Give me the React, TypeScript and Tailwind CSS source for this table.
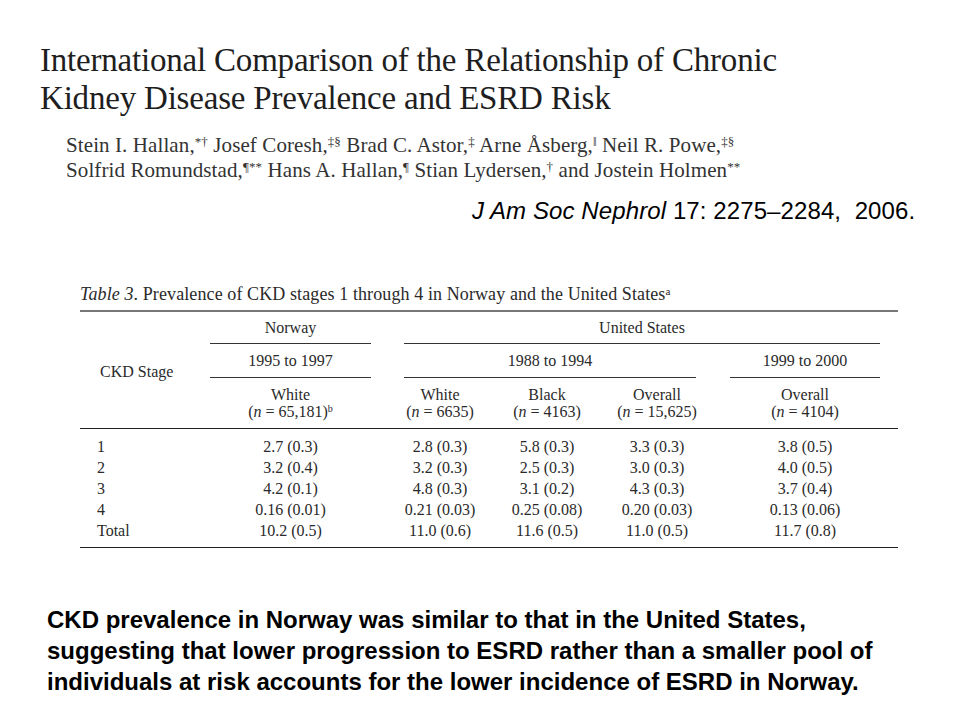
import React from "react";

const serif = { fontFamily: '"Liberation Serif", "DejaVu Serif", serif' };

const rows = [
  ["1", "2.7 (0.3)", "2.8 (0.3)", "5.8 (0.3)", "3.3 (0.3)", "3.8 (0.5)"],
  ["2", "3.2 (0.4)", "3.2 (0.3)", "2.5 (0.3)", "3.0 (0.3)", "4.0 (0.5)"],
  ["3", "4.2 (0.1)", "4.8 (0.3)", "3.1 (0.2)", "4.3 (0.3)", "3.7 (0.4)"],
  ["4", "0.16 (0.01)", "0.21 (0.03)", "0.25 (0.08)", "0.20 (0.03)", "0.13 (0.06)"],
  ["Total", "10.2 (0.5)", "11.0 (0.6)", "11.6 (0.5)", "11.0 (0.5)", "11.7 (0.8)"],
];

function NHead({ label, n, sup }: { label: string; n: string; sup?: string }) {
  return (
    <div className="flex flex-col items-center leading-[17px] whitespace-nowrap">
      <span>{label}</span>
      <span>
        (<i>n</i> = {n})
        {sup ? <sup className="text-[10px]">{sup}</sup> : null}
      </span>
    </div>
  );
}

export default function App() {
  return (
    <div className="w-[960px] h-[720px] bg-white relative overflow-hidden">
      {/* Title */}
      <div className="pl-[40px] pt-[41px] text-[#1e1e1e] text-[33px] leading-[38px] tracking-[-0.2px] whitespace-nowrap" style={serif}>
        <div>International Comparison of the Relationship of Chronic</div>
        <div>Kidney Disease Prevalence and ESRD Risk</div>
      </div>

      {/* Authors */}
      <div className="pl-[66px] pt-[16px] text-[#333] text-[21px] leading-[25px] tracking-[0.1px] whitespace-nowrap" style={serif}>
        <div>
          Stein I. Hallan,<sup className="text-[13px]">*†</sup> Josef Coresh,<sup className="text-[13px]">‡§</sup> Brad C. Astor,<sup className="text-[13px]">‡</sup> Arne Åsberg,<sup className="text-[13px]">‖</sup> Neil R. Powe,<sup className="text-[13px]">‡§</sup>
        </div>
        <div>
          Solfrid Romundstad,<sup className="text-[13px]">¶**</sup> Hans A. Hallan,<sup className="text-[13px]">¶</sup> Stian Lydersen,<sup className="text-[13px]">†</sup> and Jostein Holmen<sup className="text-[13px]">**</sup>
        </div>
      </div>

      {/* Citation */}
      <div
        className="pl-[472px] pt-[14px] text-black text-[24px] leading-[28px] tracking-[0.1px] whitespace-pre"
        style={{ fontFamily: '"Liberation Sans", Arial, sans-serif' }}
      >
        <i>J Am Soc Nephrol</i> 17: 2275–2284,  2006.
      </div>

      {/* Table */}
      <div className="pl-[80px] pt-[58px] text-[#2a2a2a] text-[16px]" style={serif}>
        <div className="leading-[22px] text-[18px] pb-[5px] tracking-[0.1px] whitespace-nowrap">
          <i>Table 3</i>. Prevalence of CKD stages 1 through 4 in Norway and the United States<sup className="text-[11px]">a</sup>
        </div>
        <div className="w-[818px] border-t-[2px] border-[#777]">
          <div className="grid grid-cols-[130px_161px_33px_72px_142px_78px_34px_150px_18px] grid-rows-[32px_34px_50px] border-b border-[#222]">
            <div className="row-start-1 row-span-3 col-start-1 flex items-center pl-[20px] pt-[4px]">CKD Stage</div>
            <div className="row-start-1 col-start-2 flex items-center justify-center border-b border-[#333]">Norway</div>
            <div className="row-start-1 col-start-4 col-span-5 flex items-center justify-center border-b border-[#333]">United States</div>
            <div className="row-start-2 col-start-2 flex items-center justify-center border-b border-[#333]">1995 to 1997</div>
            <div className="row-start-2 col-start-4 col-span-3 flex items-center justify-center border-b border-[#333]">1988 to 1994</div>
            <div className="row-start-2 col-start-8 flex items-center justify-center border-b border-[#333]">1999 to 2000</div>
            <div className="row-start-3 col-start-2 flex items-center justify-center">
              <NHead label="White" n="65,181" sup="b" />
            </div>
            <div className="row-start-3 col-start-4 flex items-center justify-center">
              <NHead label="White" n="6635" />
            </div>
            <div className="row-start-3 col-start-5 flex items-center justify-center">
              <NHead label="Black" n="4163" />
            </div>
            <div className="row-start-3 col-start-6 flex items-center justify-center">
              <NHead label="Overall" n="15,625" />
            </div>
            <div className="row-start-3 col-start-8 flex items-center justify-center">
              <NHead label="Overall" n="4104" />
            </div>
          </div>
          <div className="pt-[6px] pb-[7px] border-b border-[#222]">
            {rows.map((r) => (
              <div
                key={r[0]}
                className="grid grid-cols-[130px_161px_33px_72px_142px_78px_34px_150px_18px] h-[21px] items-center whitespace-nowrap"
              >
                <div className="pl-[17px]">{r[0]}</div>
                <div className="text-center">{r[1]}</div>
                <div />
                <div className="text-center">{r[2]}</div>
                <div className="text-center">{r[3]}</div>
                <div className="text-center">{r[4]}</div>
                <div />
                <div className="text-center">{r[5]}</div>
                <div />
              </div>
            ))}
          </div>
        </div>
      </div>

      {/* Summary */}
      <div
        className="pl-[47px] pt-[56px] text-black font-bold text-[24px] leading-[31px] whitespace-nowrap"
        style={{ fontFamily: '"Liberation Sans", Arial, sans-serif' }}
      >
        <div>CKD prevalence in Norway was similar to that in the United States,</div>
        <div>suggesting that lower progression to ESRD rather than a smaller pool of</div>
        <div>individuals at risk accounts for the lower incidence of ESRD in Norway.</div>
      </div>
    </div>
  );
}
